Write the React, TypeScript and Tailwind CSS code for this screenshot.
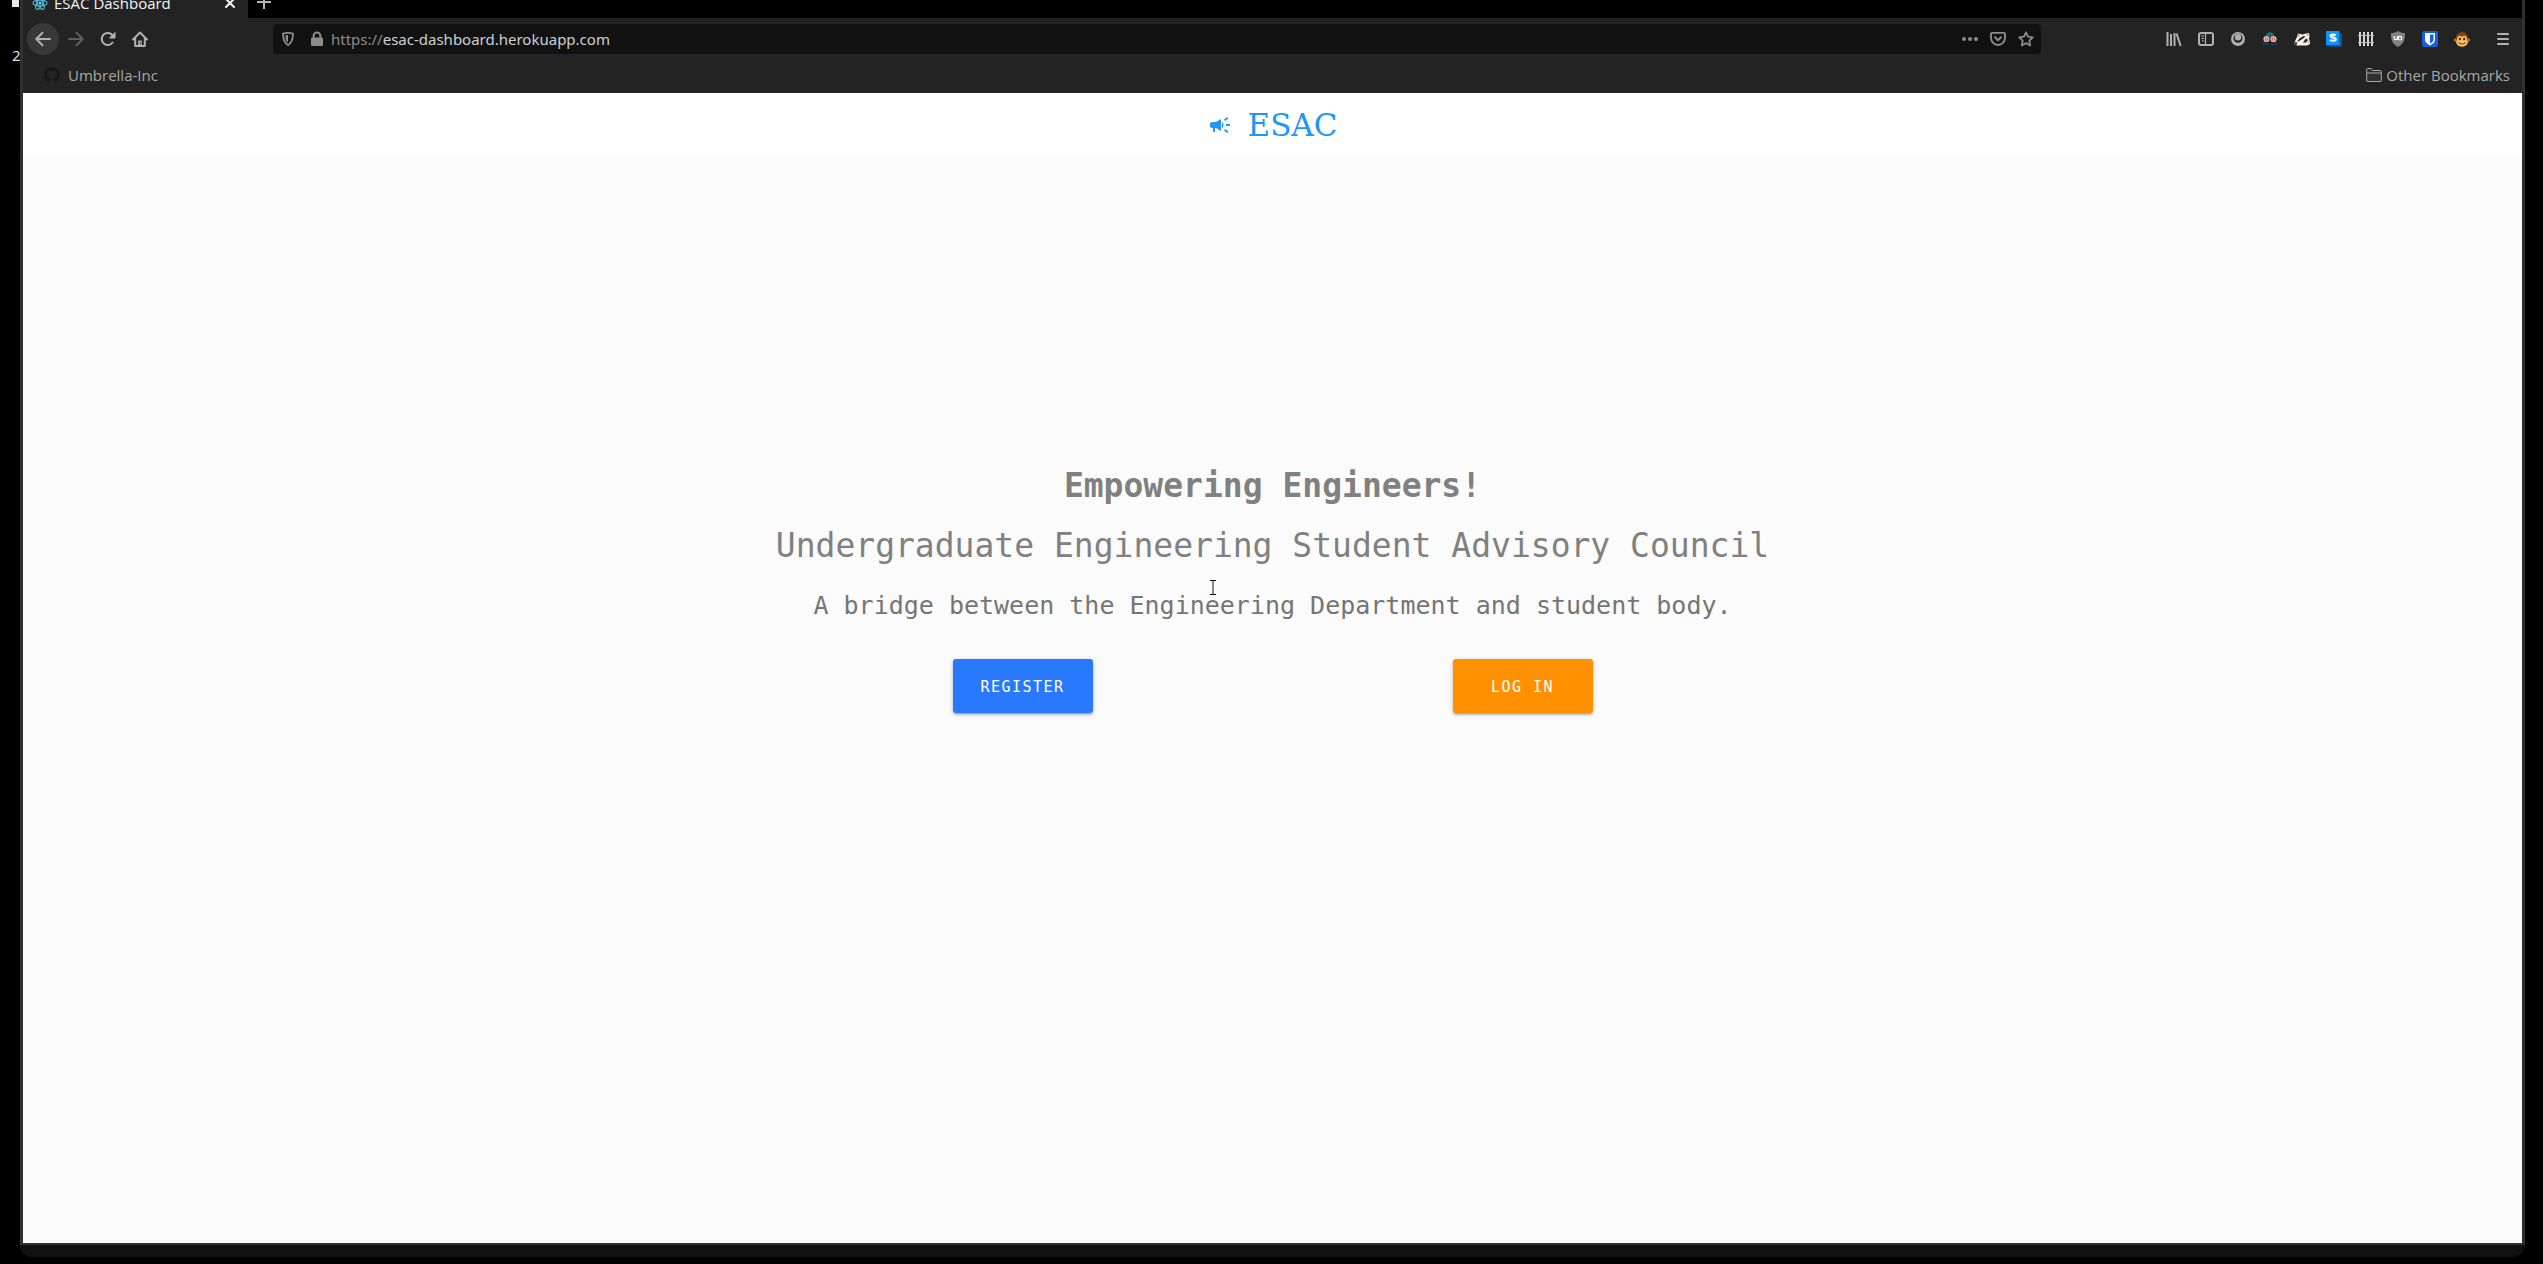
import type { ReactNode } from "react";

const strokeProps = { fill: "none", stroke: "currentColor", strokeWidth: 2, strokeLinecap: "round", strokeLinejoin: "round" } as const;

function Icon({ children, className = "size-4" }: { children: ReactNode; className?: string }) {
  return (
    <svg viewBox="0 0 16 16" className={`block shrink-0 ${className}`} aria-hidden="true">
      {children}
    </svg>
  );
}

function ToolButton({ label, children }: { label: string; children: ReactNode }) {
  return (
    <button type="button" aria-label={label} className="flex size-8 items-center justify-center">
      {children}
    </button>
  );
}

function ReactLogo() {
  return (
    <Icon>
      <g fill="none" stroke="#4fb4cf" strokeWidth="1.2">
        <ellipse cx="8" cy="8" rx="7" ry="2.8" />
        <ellipse cx="8" cy="8" rx="7" ry="2.8" transform="rotate(60 8 8)" />
        <ellipse cx="8" cy="8" rx="7" ry="2.8" transform="rotate(120 8 8)" />
      </g>
      <circle cx="8" cy="8" r="1.5" fill="#61dafb" />
    </Icon>
  );
}

function TabStrip() {
  return (
    <div className="flex h-[18px] items-end overflow-hidden bg-black">
      <div className="flex h-[30px] w-[225px] shrink-0 items-center bg-[#232323] pr-2.5 pl-[9px] text-[#f5f5f5]">
        <ReactLogo />
        <span className="ml-1.5 flex-1 font-['Open_Sans',sans-serif] text-[15px] leading-5">ESAC Dashboard</span>
        <button type="button" aria-label="Close tab">
          <Icon>
            <path d="M4 4l8 8M12 4l-8 8" {...strokeProps} />
          </Icon>
        </button>
      </div>
      <button type="button" aria-label="New tab" className="flex size-8 shrink-0 items-center justify-center text-[#b8b8b8]">
        <Icon>
          <path d="M8 1v14M1 8h14" {...strokeProps} strokeWidth={2} strokeLinecap="butt" />
        </Icon>
      </button>
    </div>
  );
}

function AddressBar() {
  return (
    <div className="flex h-[30px] flex-1 items-center rounded-[4px] bg-[#111111] pr-[7px] pl-[7px] text-[#8b8b8b]">
      <button type="button" aria-label="Tracking protection">
        <Icon>
          <path d="M8 1.900c1.700 0 3.500.3 5 .8 0 5.600-.8 8.700-5 11.400C3.800 11.400 3 8.300 3 2.700c1.500-.5 3.300-.8 5-.8z" {...strokeProps} strokeWidth={1.8} />
          <path d="M8 4v7.800C6 10.100 5.500 8 5.400 4.400 6.200 4.100 7.100 4 8 4z" fill="currentColor" />
        </Icon>
      </button>
      <button type="button" aria-label="Connection secure" className="ml-[13px]">
        <Icon>
          <path d="M4.600 7V4.800a3.400 3.400 0 0 1 6.800 0V7" {...strokeProps} />
          <rect x="2" y="6.500" width="12" height="8.500" rx="1" fill="currentColor" />
        </Icon>
      </button>
      <label htmlFor="address" className="ml-1.5 text-[15px] leading-5">
        https://
      </label>
      <input
        id="address"
        type="text"
        defaultValue="esac-dashboard.herokuapp.com"
        className="min-w-0 flex-1 bg-transparent text-[15px] leading-5 text-[#d0d0d0] outline-none"
      />
      <div className="flex items-center gap-3">
        <button type="button" aria-label="Page actions">
          <Icon>
            <g fill="currentColor">
              <circle cx="2" cy="8" r="2" />
              <circle cx="8" cy="8" r="2" />
              <circle cx="14" cy="8" r="2" />
            </g>
          </Icon>
        </button>
        <button type="button" aria-label="Save to Pocket">
          <Icon>
            <path d="M2 1.900h12a1 1 0 0 1 1 1V7A7 7 0 0 1 1 7V2.900a1 1 0 0 1 1-1z" {...strokeProps} strokeWidth={1.9} />
            <path d="M5 6.300l3 2.900 3-2.900" {...strokeProps} />
          </Icon>
        </button>
        <button type="button" aria-label="Bookmark this page">
          <Icon>
            <path d="M8 1.300l2 4.400 4.800.6-3.500 3.300.9 4.900L8 12.100l-4.200 2.400.9-4.900L1.200 6.300 6 5.700z" {...strokeProps} strokeWidth={1.8} />
          </Icon>
        </button>
      </div>
    </div>
  );
}

function Extensions() {
  return (
    <div className="flex items-center text-[#b1b1b1]">
      <ToolButton label="Library">
        <Icon>
          <path d="M1.500 1v14M5 3v12M8.500 2v13" {...strokeProps} strokeLinecap="butt" />
          <path d="M10.500 2.500L14.700 15" {...strokeProps} strokeLinecap="butt" />
        </Icon>
      </ToolButton>
      <ToolButton label="Sidebars">
        <Icon>
          <rect x="1" y="2" width="14" height="12" rx="2" {...strokeProps} />
          <path d="M7.500 2v12" {...strokeProps} strokeWidth={1.2} />
          <path d="M3 5h3M3.500 7.500h2.500M4 10h2" {...strokeProps} strokeWidth={1} strokeLinecap="butt" />
        </Icon>
      </ToolButton>
      <ToolButton label="Account">
        <Icon>
          <circle cx="8" cy="8" r="7" fill="currentColor" />
          <circle cx="8" cy="7.300" r="4.500" fill="#232323" />
          <circle cx="8" cy="6.200" r="3.200" fill="currentColor" />
        </Icon>
      </ToolButton>
      <ToolButton label="Privacy scout">
        <Icon>
          <path d="M3.500 6C3.500 2.500 6 .8 8.500 1c2.500.2 4 2 4 5z" fill="#145e70" />
          <path d="M6 3l2 1.500M9 2l1 2" stroke="#2695a0" strokeWidth="1" />
          <path d="M.3 14.500L2 10h12l1.700 4.500-3-1-2.700 1.500-2-2-2 2-2.500-1.500z" fill="#16395a" />
          <path d="M4 11h8l-4 2z" fill="#111827" />
          <circle cx="4.500" cy="8" r="3.100" fill="#f3b7a5" />
          <circle cx="11.500" cy="8" r="3.100" fill="#f3b7a5" />
          <circle cx="4.500" cy="8" r="1.700" fill="#e4473b" />
          <circle cx="11.500" cy="8" r="1.700" fill="#e4473b" />
          <circle cx="4.500" cy="7.800" r=".8" fill="#fff" />
          <circle cx="11.500" cy="7.800" r=".8" fill="#fff" />
        </Icon>
      </ToolButton>
      <ToolButton label="Privacy Badger">
        <Icon>
          <path d="M0 13L1.500 9 3 6l1-3.500 2.500.5L9 3.500l3-1 3-.5.5 3-.5 3 1 3v2l-3 1.500H3z" fill="#f5f0e8" />
          <path d="M3 11l2.500-3.500L9.500 5l2 .5L9 7.500 6 9.500z" fill="#202020" />
          <path d="M4 3.300l2.500.7L4 6zM12 3.500l2.500-.7L14 5z" fill="#d99a5b" />
          <path d="M9 11.500l2-3 2-1 .8 2-2 2z" fill="#252525" />
          <path d="M13 12l2-2 .5 2.500z" fill="#d99a5b" />
          <circle cx="1.800" cy="12.500" r="1.300" fill="#222" />
        </Icon>
      </ToolButton>
      <ToolButton label="Stylus">
        <Icon>
          <path d="M3 14h11l2 2H4zM13.500 1L16 3v12l-2.500-1z" fill="#14528c" />
          <rect x="0" y="0" width="13.500" height="14" fill="#0a94ff" />
          <path d="M0 15h14" stroke="#123b70" strokeWidth="1.500" strokeDasharray="1 1" />
          <path d="M9.700 4.200C8.600 3.500 4.600 3.100 4.600 5c0 2 5.200 1 5.200 3.300 0 2-4.400 1.700-5.700.6" fill="none" stroke="#fff" strokeWidth="2.200" />
        </Icon>
      </ToolButton>
      <ToolButton label="Containers">
        <Icon>
          <path d="M2 1v14M6 1v14M10 1v14M14 1v14" stroke="#d8d8d8" strokeWidth="2" />
          <path d="M0 4.500h16M0 11.500h16" stroke="#bdbdbd" strokeWidth="1.200" />
        </Icon>
      </ToolButton>
      <ToolButton label="uBlock Origin">
        <Icon>
          <path d="M8 0c2 1.500 4.500 2 7 2 0 7-1 10.500-7 14C2 12.500 1 9 1 2c2.500 0 5-.5 7-2z" fill="#808080" />
          <path d="M4.300 5v2.500a1.700 1.700 0 0 0 3.200 0V5" fill="none" stroke="#fff" strokeWidth="1.200" />
          <circle cx="10" cy="7.200" r="1.800" fill="none" stroke="#fff" strokeWidth="1.200" />
        </Icon>
      </ToolButton>
      <ToolButton label="Bitwarden">
        <Icon>
          <rect width="16" height="16" rx="2" fill="#175ddc" />
          <path d="M3 2h10v6.500c0 3-3 5-5 6-2-1-5-3-5-6z" fill="#fff" />
          <path d="M8 3.500h3.500v5c0 1.800-1.800 3.200-3.500 4.200z" fill="#175ddc" />
        </Icon>
      </ToolButton>
      <ToolButton label="Userscripts">
        <Icon>
          <circle cx="1.800" cy="9" r="1.800" fill="#c9812f" />
          <circle cx="14.200" cy="9" r="1.800" fill="#c9812f" />
          <path d="M1.800 9C1.500 4 4 1.500 7 1.500L9.500 0 9 1.500l3-.5-1 1.300c2.500 1 3.500 3.500 3.200 6.700 0 4-2.200 7-6.200 7s-6.200-3-6.200-7z" fill="#8a3f12" />
          <path d="M8 6c2-2.500 5-1 5 2 0 1 .8 1.500.8 3 0 3-3 4.500-5.800 4.500S2.200 14 2.200 11c0-1.500.8-2 .8-3 0-3 3-4.500 5-2z" fill="#f3bd61" />
          <ellipse cx="5.800" cy="8" rx="1" ry="1.300" fill="#2b1609" />
          <ellipse cx="10.200" cy="8" rx="1" ry="1.300" fill="#2b1609" />
          <path d="M4.500 11.500c1.500 2 5.500 2 7 0" fill="none" stroke="#7b3b15" strokeWidth="1.200" />
        </Icon>
      </ToolButton>
    </div>
  );
}

function NavigationBar() {
  return (
    <div className="flex h-[42px] items-center bg-[#232323] pr-[3px] pl-1 text-[#b1b1b1]">
      <button type="button" aria-label="Back" className="flex size-8 items-center justify-center rounded-full bg-[#383838]">
        <Icon>
          <path d="M15 8H1.500M7.500 1.800L1.300 8l6.200 6.200" {...strokeProps} />
        </Icon>
      </button>
      <button type="button" aria-label="Forward" disabled className="flex h-8 w-[33px] items-center justify-center text-[#5f5f5f]">
        <Icon>
          <path d="M1 8h13.500M8.500 1.800L14.700 8l-6.200 6.200" {...strokeProps} />
        </Icon>
      </button>
      <ToolButton label="Reload">
        <Icon>
          <path d="M12.600 11.500A6 6 0 1 1 12.500 4.300" {...strokeProps} />
          <path d="M15 1.500V7H9.500z" fill="currentColor" stroke="currentColor" strokeLinejoin="round" />
        </Icon>
      </ToolButton>
      <ToolButton label="Home">
        <Icon>
          <path d="M1 8.500l7-7 7 7M3.200 7.500V15h9.600V7.500" {...strokeProps} />
          <path d="M6.200 14.500v-5h3.600v5" fill="currentColor" />
          <path d="M8 11.500h1v1.500H8z" fill="#232323" />
        </Icon>
      </ToolButton>
      <div className="ml-[117px] flex flex-1">
        <AddressBar />
      </div>
      <div className="ml-[117px]">
        <Extensions />
      </div>
      <button type="button" aria-label="Open menu" className="ml-[9px] flex size-8 items-center justify-center">
        <Icon>
          <path d="M3 3h10M3 8h10M3 13h10" {...strokeProps} />
        </Icon>
      </button>
    </div>
  );
}

function BookmarksBar() {
  return (
    <div className="flex h-[33px] items-center justify-between bg-[#232323] pr-3 pb-[3px] pl-[21px] font-['Open_Sans',sans-serif] text-[15px] leading-5 text-[#a8a8a8]">
      <a href="#umbrella" className="flex items-center gap-2">
        <Icon>
          <path
            fill="#171717"
            d="M8 0C3.580 0 0 3.580 0 8c0 3.540 2.290 6.530 5.470 7.590.4.070.55-.17.55-.38 0-.19-.010-.82-.010-1.490-2.010.37-2.530-.49-2.690-.94-.090-.23-.48-.94-.82-1.130-.28-.15-.68-.52-.010-.53.63-.010 1.080.58 1.230.82.72 1.210 1.870.87 2.330.66.070-.52.28-.87.510-1.070-1.780-.2-3.640-.89-3.640-3.950 0-.87.31-1.590.82-2.150-.080-.2-.36-1.020.080-2.120 0 0 .67-.21 2.200.82.64-.18 1.320-.27 2-.27s1.360.090 2 .27c1.530-1.040 2.200-.82 2.200-.82.44 1.100.16 1.920.080 2.120.51.56.82 1.270.82 2.150 0 3.070-1.870 3.750-3.650 3.950.29.25.54.73.54 1.480 0 1.070-.010 1.930-.010 2.200 0 .21.15.46.55.38A8.010 8.010 0 0 0 16 8c0-4.420-3.580-8-8-8z"
          />
        </Icon>
        Umbrella-Inc
      </a>
      <button type="button" className="flex items-center gap-1">
        <Icon>
          <path d="M.7 14V2.500a1 1 0 0 1 1-1h3.500l1.500 2h7.600a1 1 0 0 1 1 1V14a.5.5 0 0 1-.5.500H1.200A.5.5 0 0 1 .7 14zM1 6h14" fill="#303030" stroke="currentColor" />
        </Icon>
        Other Bookmarks
      </button>
    </div>
  );
}

function SiteHeader() {
  return (
    <nav className="flex h-16 shrink-0 items-center justify-center bg-white">
      <a href="#home" className="flex items-center gap-4 font-['DejaVu_Serif',serif] text-[31px] leading-10 text-[#2196f3]">
        <svg viewBox="0 0 24 24" className="size-6" fill="currentColor" aria-hidden="true">
          <path d="M18 11v2h4v-2h-4zM16 17.610c.96.710 2.210 1.650 3.200 2.390.4-.53.8-1.070 1.200-1.600-.99-.74-2.240-1.680-3.200-2.400-.4.540-.8 1.080-1.200 1.610zM20.400 5.600c-.4-.53-.8-1.070-1.200-1.600-.99.740-2.240 1.680-3.200 2.400.4.530.8 1.070 1.200 1.600.96-.72 2.210-1.650 3.200-2.400zM4 9c-1.100 0-2 .9-2 2v2c0 1.100.9 2 2 2h1v4h2v-4h1l5 3V6L8 9H4zM15.500 12c0-1.330-.58-2.530-1.500-3.350v6.690c.92-.81 1.500-2.010 1.500-3.340z" />
        </svg>
        ESAC
      </a>
    </nav>
  );
}

function TextCursor() {
  return (
    <svg viewBox="0 0 10 20" className="absolute -top-2.5 left-[435px] h-5 w-2.5" aria-hidden="true">
      <path d="M2 2.500h2.500L5 3l.5-.5H8M5 3v13M2 16.500h2.500L5 16l.5.500H8" fill="none" stroke="#fff" strokeWidth="3" />
      <path d="M2 2.500h6M5 3v13M2 16.500h6" fill="none" stroke="#111" strokeWidth="1" />
    </svg>
  );
}

const actionClass =
  "h-[54px] w-[140px] rounded-[3px] pt-0.5 text-[15px] leading-5 tracking-widest text-white uppercase shadow-[0_2px_2px_0_rgba(0,0,0,0.14),0_3px_1px_-2px_rgba(0,0,0,0.12),0_1px_5px_0_rgba(0,0,0,0.2)]";

function Landing() {
  return (
    <main className="flex flex-1 flex-col items-center bg-[#fbfbfb] pt-[311px] font-['DejaVu_Sans_Mono',monospace]">
      <div className="w-full max-w-[1000px] text-center">
        <h1 className="text-[33px] leading-9 font-bold text-[#808080]">Empowering Engineers!</h1>
        <h2 className="mt-6 text-[33px] leading-9 whitespace-nowrap text-[#808080]">Undergraduate Engineering Student Advisory Council</h2>
        <div className="relative mt-6">
          <p className="text-[25px] leading-9 text-[#757575]">A bridge between the Engineering Department and student body.</p>
          <TextCursor />
        </div>
        <div className="mt-[35px] grid grid-cols-2 justify-items-center">
          <button type="button" className={`${actionClass} bg-[#2979ff]`}>
            Register
          </button>
          <button type="button" className={`${actionClass} bg-[#ff9100]`}>
            Log in
          </button>
        </div>
      </div>
    </main>
  );
}

export default function App() {
  return (
    <div className="flex h-screen overflow-hidden bg-black pr-[18px] pb-[7px] font-['Noto_Sans',sans-serif]">
      <aside className="w-5 shrink-0 overflow-hidden pl-3">
        <div className="h-[7px] w-[7px] bg-[#e8e8e8]" />
        <div className="mt-[38px] text-[15px] leading-5 text-[#e0e0e0]">2</div>
      </aside>
      <div className="flex min-w-0 flex-1 flex-col overflow-hidden rounded-b-xl bg-[#111111]">
        <div className="flex flex-1 flex-col border-x-[3px] border-b-2 border-[#303030]">
          <TabStrip />
          <NavigationBar />
          <BookmarksBar />
          <SiteHeader />
          <Landing />
        </div>
        <div className="h-3 shrink-0" />
      </div>
    </div>
  );
}
